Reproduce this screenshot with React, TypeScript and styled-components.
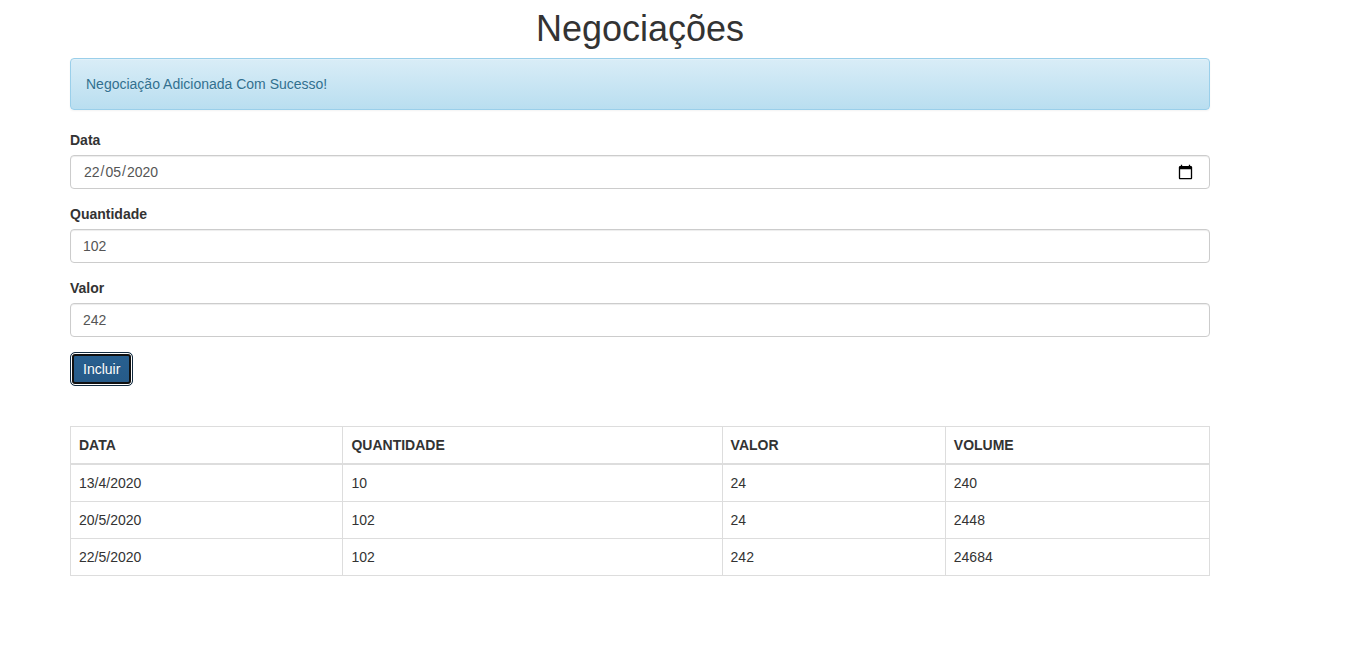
import React, { useState } from "react";
import styled, { createGlobalStyle } from "styled-components";

const GlobalStyle = createGlobalStyle`
  *, *::before, *::after { box-sizing: border-box; }
  body {
    margin: 0;
    background: #fff;
    color: #333;
    font-family: "Liberation Sans", Arial, sans-serif;
    font-size: 14px;
    line-height: 20px;
  }
`;

const Page = styled.main`
  padding: 9px 138px 20px 70px;
`;

const Title = styled.h1`
  margin: 0 0 9px;
  font-size: 36px;
  font-weight: 500;
  line-height: 40px;
  text-align: center;
`;

const Alert = styled.p`
  margin: 0 0 20px;
  padding: 15px;
  border: 1px solid #9acfea;
  border-radius: 4px;
  background-image: linear-gradient(to bottom, #d9edf7 0%, #b9def0 100%);
  box-shadow: inset 0 1px 0 rgba(255, 255, 255, 0.25), 0 1px 2px rgba(0, 0, 0, 0.05);
  color: #31708f;
  text-shadow: 0 1px 0 rgba(255, 255, 255, 0.2);
`;

const Form = styled.form`
  margin-bottom: 40px;
`;

const Field = styled.div`
  margin-bottom: 15px;
`;

const Label = styled.label`
  display: block;
  margin-bottom: 5px;
  font-weight: 700;
`;

const Input = styled.input`
  display: block;
  width: 100%;
  height: 34px;
  padding: 6px 12px;
  border: 1px solid #ccc;
  border-radius: 4px;
  background: #fff;
  box-shadow: inset 0 1px 1px rgba(0, 0, 0, 0.075);
  color: #555;
  font: inherit;
  appearance: textfield;

  &::-webkit-inner-spin-button {
    appearance: none;
    margin: 0;
  }
`;

/* Shows day / month / year in that order in any browser locale. */
const DateInput = styled(Input)`
  &::-webkit-datetime-edit-fields-wrapper {
    display: grid;
    grid-template-columns: repeat(5, max-content);
  }
  &::-webkit-datetime-edit-text { grid-row: 1; }
  &::-webkit-datetime-edit-day-field { grid-area: 1 / 1; }
  &::-webkit-datetime-edit-month-field { grid-area: 1 / 3; }
  &::-webkit-datetime-edit-year-field { grid-area: 1 / 5; }
  &::-webkit-calendar-picker-indicator {
    width: 17px;
    height: 17px;
    padding: 0 3px;
  }
`;

const SubmitButton = styled.button`
  display: block;
  height: 34px;
  padding: 6px 12px;
  border: 1px solid #122b40;
  border-radius: 5px;
  background: linear-gradient(to bottom, #286090, #265a88);
  box-shadow: inset 0 0 0 1px #fff, inset 0 0 0 3px #101010;
  color: #fff;
  font: inherit;
  text-shadow: 0 -1px 0 rgba(0, 0, 0, 0.2);
  cursor: pointer;
`;

const Table = styled.table`
  width: 100%;
  border: 1px solid #ddd;
  border-collapse: collapse;
  border-spacing: 0;
`;

const HeadCell = styled.th`
  padding: 8px;
  border: 1px solid #ddd;
  border-bottom-width: 2px;
  text-align: left;
  vertical-align: bottom;
`;

const Cell = styled.td`
  padding: 8px;
  border: 1px solid #ddd;
  vertical-align: top;
`;

interface Negotiation {
  date: string;
  amount: number;
  value: number;
}

const initialRows: Negotiation[] = [
  { date: "13/4/2020", amount: 10, value: 24 },
  { date: "20/5/2020", amount: 102, value: 24 },
  { date: "22/5/2020", amount: 102, value: 242 },
];

export default function App() {
  const [rows, setRows] = useState(initialRows);
  const [date, setDate] = useState("2020-05-22");
  const [amount, setAmount] = useState("102");
  const [value, setValue] = useState("242");

  const add = (event: React.FormEvent) => {
    event.preventDefault();
    const [y, m, d] = date.split("-").map(Number);
    setRows([...rows, { date: `${d}/${m}/${y}`, amount: Number(amount), value: Number(value) }]);
  };

  return (
    <>
      <GlobalStyle />
      <Page>
        <Title>Negociações</Title>
        <Alert role="status">Negociação Adicionada Com Sucesso!</Alert>
        <Form onSubmit={add}>
          <Field>
            <Label htmlFor="data">Data</Label>
            <DateInput id="data" type="date" required value={date} onChange={(e) => setDate(e.target.value)} />
          </Field>
          <Field>
            <Label htmlFor="quantidade">Quantidade</Label>
            <Input id="quantidade" type="number" min="1" required value={amount} onChange={(e) => setAmount(e.target.value)} />
          </Field>
          <Field>
            <Label htmlFor="valor">Valor</Label>
            <Input id="valor" type="number" min="0" step="0.01" required value={value} onChange={(e) => setValue(e.target.value)} />
          </Field>
          <SubmitButton type="submit">Incluir</SubmitButton>
        </Form>
        <Table>
          <thead>
            <tr>
              <HeadCell scope="col">DATA</HeadCell>
              <HeadCell scope="col">QUANTIDADE</HeadCell>
              <HeadCell scope="col">VALOR</HeadCell>
              <HeadCell scope="col">VOLUME</HeadCell>
            </tr>
          </thead>
          <tbody>
            {rows.map((row, i) => (
              <tr key={i}>
                <Cell>{row.date}</Cell>
                <Cell>{row.amount}</Cell>
                <Cell>{row.value}</Cell>
                <Cell>{row.amount * row.value}</Cell>
              </tr>
            ))}
          </tbody>
        </Table>
      </Page>
    </>
  );
}
